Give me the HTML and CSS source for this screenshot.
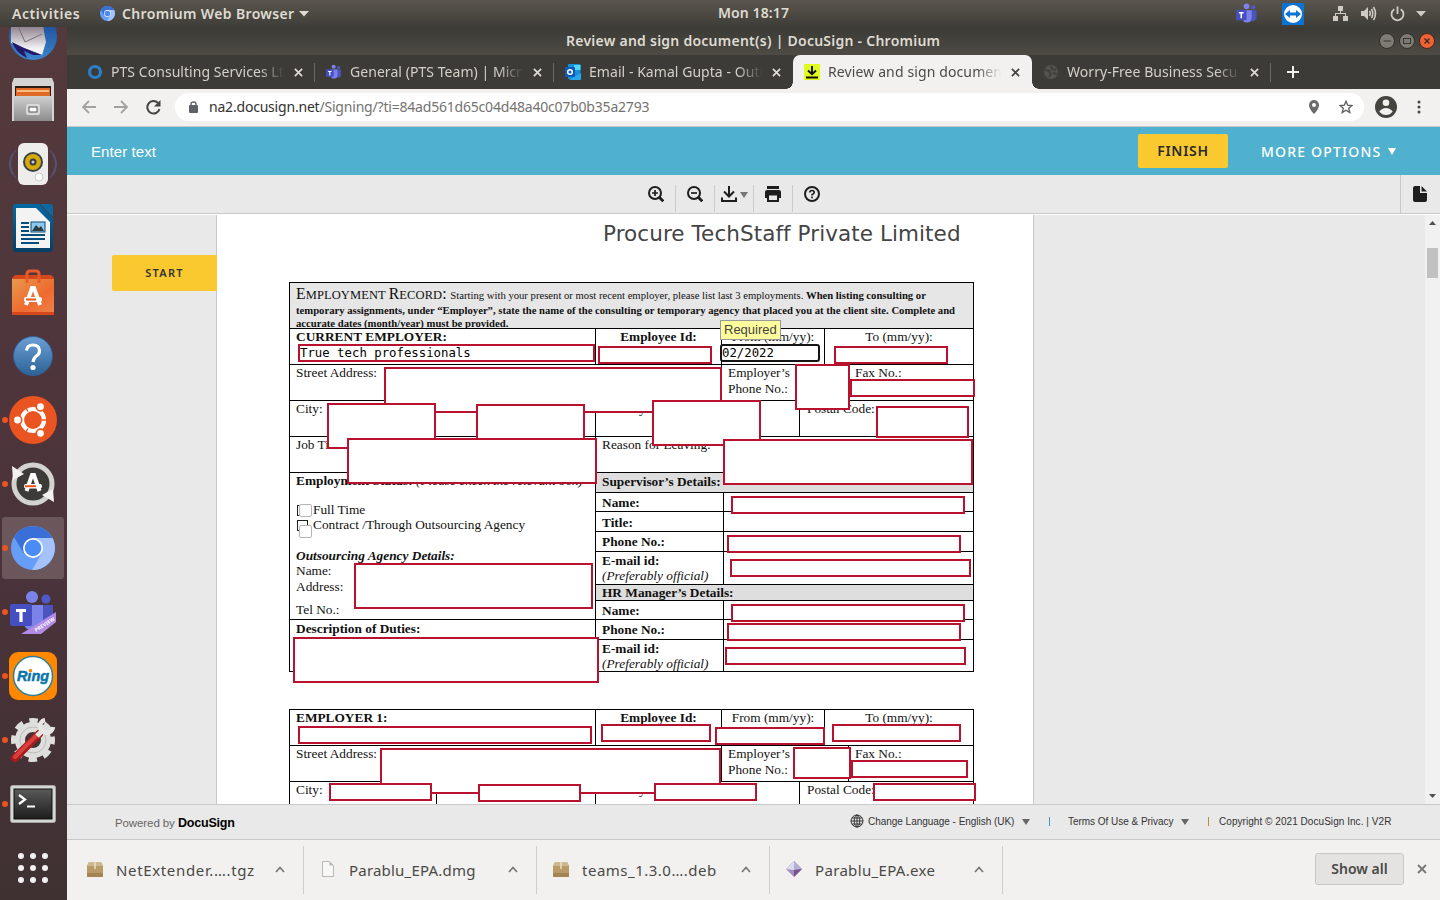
FILE: index.html
```html
<!DOCTYPE html>
<html lang="en">
<head>
<meta charset="utf-8">
<title>Review and sign document(s) | DocuSign - Chromium</title>
<link rel="stylesheet" href="styles.css">
</head>
<body>
<svg width="0" height="0" class="defs">
  <defs>
    <linearGradient id="gGrey" x1="0" y1="0" x2="0" y2="1"><stop offset="0" stop-color="#d0d0d0"/><stop offset="1" stop-color="#8c8c8c"/></linearGradient>
    <linearGradient id="gBird" x1="0" y1="0" x2="0" y2="1"><stop offset="0" stop-color="#163f8c"/><stop offset="1" stop-color="#3c86cf"/></linearGradient>
    <linearGradient id="gMail" x1="0" y1="0" x2="0" y2="1"><stop offset=".3" stop-color="#8d7f8b"/><stop offset=".85" stop-color="#f4f3f5"/></linearGradient>
    <linearGradient id="gOrange" x1="0" y1="0" x2="1" y2="1"><stop offset="0" stop-color="#e8984f"/><stop offset=".6" stop-color="#ee6a2e"/><stop offset="1" stop-color="#f0814a"/></linearGradient>
    <linearGradient id="gHelp" x1="0" y1="0" x2="0" y2="1"><stop offset="0" stop-color="#6d9fd6"/><stop offset="1" stop-color="#2b6396"/></linearGradient>
    <linearGradient id="gWriter" x1="0" y1="0" x2="0" y2="1"><stop offset="0" stop-color="#0369a3"/><stop offset="1" stop-color="#063f66"/></linearGradient>
    <linearGradient id="gTerm" x1="0" y1="0" x2="0" y2="1"><stop offset="0" stop-color="#5a5a5a"/><stop offset="1" stop-color="#1d1d1d"/></linearGradient>
    <symbol id="chromium" viewBox="0 0 44 44">
      <circle cx="22" cy="22" r="22" fill="#669df6"/>
      <path d="M3 11A22 22 0 0 1 41.5 12H22L12.5 27Z" fill="#3a6fd8"/>
      <path d="M41.5 12A22 22 0 0 1 21 44L31 27 22 12Z" fill="#a3c3fa"/>
      <circle cx="22" cy="22" r="10" fill="#fff"/><circle cx="22" cy="22" r="8.3" fill="#4c8bf5"/>
    </symbol>
    <symbol id="teams" viewBox="0 0 46 44">
      <circle cx="22" cy="7" r="6" fill="#7b83eb"/><circle cx="36" cy="9" r="4.5" fill="#5059c9"/>
      <path d="M27 15H43V29A8 8 0 0 1 27 31Z" fill="#4b53bc"/>
      <path d="M13 15H33V31A10 10 0 0 1 13 31Z" fill="#7b83eb"/>
      <rect x="0" y="14" width="22" height="22" rx="2" fill="#454fc0"/>
      <path d="M6 19H16V22H12.6V32H9.4V22H6Z" fill="#fff"/>
    </symbol>
    <symbol id="close" viewBox="0 0 10 10"><path d="M1 1L9 9M9 1L1 9" stroke="currentColor" stroke-width="1.9" fill="none"/></symbol>
    <symbol id="box" viewBox="0 0 16 15"><path d="M2 0H14L16 4V14a1 1 0 0 1-1 1H1a1 1 0 0 1-1-1V4Z" fill="#b89a66"/><path d="M2 0H14L16 4H0Z" fill="#cdb88f"/><path d="M8 0V7" stroke="#e9dcc0" stroke-width="1.6"/><path d="M0 11H16V14a1 1 0 0 1-1 1H1a1 1 0 0 1-1-1Z" fill="#a38552"/></symbol>
    <symbol id="chev" viewBox="0 0 10 7"><path d="M1 6L5 1.5 9 6" fill="none" stroke="#777" stroke-width="1.7"/></symbol>
  </defs>
</svg>

<header class="panel">
  <span class="activities">Activities</span>
  <svg class="panel-app" width="15" height="15"><use href="#chromium"/></svg>
  <span class="app-name">Chromium Web Browser</span>
  <svg class="panel-caret" width="10" height="6"><path d="M0 0H10L5 5.5Z" fill="#dfdbd2"/></svg>
  <span class="clock">Mon 18:17</span>
  <div class="tray">
    <svg class="tr-teams" width="22" height="21"><use href="#teams"/></svg>
    <svg class="tr-view" width="22" height="22"><rect width="22" height="22" fill="#0b72d6"/><circle cx="11" cy="11" r="9" fill="#fff"/><path d="M3 11L8 7V9.5H14V7L19 11 14 15V12.5H8V15Z" fill="#0b72d6"/></svg>
    <svg class="tr-net" width="15" height="15" fill="#cfcbc3"><path d="M5 0h5v5H5zM0 10h5v5H0zM10 10h5v5h-5zM7 5h1v3H7zM2 7h11v1H2zM2 8h1v2H2zM12 8h1v2h-1z"/></svg>
    <svg class="tr-vol" width="16" height="15" fill="none" stroke="#cfcbc3" stroke-width="1.6"><path d="M0 5H3L7 1V14L3 10H0Z" fill="#cfcbc3" stroke="none"/><path d="M8.5 5Q10 7.5 8.5 10M10.5 3Q13 7.5 10.5 12M12.5 1Q16.5 7.5 12.5 14"/></svg>
    <svg class="tr-pow" width="15" height="16" fill="none" stroke="#cfcbc3" stroke-width="1.8"><path d="M4.3 3.2A6 6 0 1 0 10.7 3.2M7.5 .5V8"/></svg>
    <svg width="10" height="6"><path d="M0 0H10L5 5.5Z" fill="#cfcbc3"/></svg>
  </div>
</header>

<div class="desktop">
<nav class="dock">
  <div class="app"><svg width="48" height="48"><circle cx="24" cy="24" r="24" fill="url(#gBird)"/><path d="M2 10L33 2 35 20 37 30 33 43 2 31Z" fill="url(#gMail)"/><path d="M9 14L16 30 33 22" fill="none" stroke="#77707a" stroke-width="1"/><path d="M3 30L15 36 33 43 24 43 15 39 18 46Q7 41 3 30Z" fill="#231a6b"/></svg></div>
  <div class="app"><svg width="42" height="44"><path d="M2 0H40L42 5V43H0V5Z" fill="#d4d4d2"/><rect x="3" y="8" width="36" height="10" fill="#2b1d14"/><rect x="4" y="10" width="34" height="9" fill="#e06a25"/><path d="M5 13H37" stroke="#ffd9a0" stroke-width="1.5"/><rect x="2" y="18" width="38" height="25" fill="url(#gGrey)"/><rect x="14" y="26" width="14" height="11" rx="2" fill="#d9d9d9"/><rect x="17" y="29" width="8" height="5" fill="#fff" stroke="#555"/></svg></div>
  <div class="app"><svg width="48" height="44"><path d="M7 8Q-4 22 7 36M41 8Q52 22 41 36M4 11Q-3 22 4 33M44 11Q51 22 44 33" fill="none" stroke="#565170" stroke-width="1.2"/><rect x="9" y="1" width="30" height="42" rx="6" fill="#ededeb"/><circle cx="24" cy="20" r="10" fill="#3d4147"/><circle cx="24" cy="20" r="8" fill="#d6a90c"/><circle cx="24" cy="20" r="3.5" fill="#3a3d45"/><circle cx="24" cy="20" r="1.5" fill="#ccc"/><circle cx="30" cy="35" r="4" fill="#fff" stroke="#ccc"/></svg></div>
  <div class="app"><svg width="40" height="48"><path d="M3 0H26L40 14V45a3 3 0 0 1-3 3H3a3 3 0 0 1-3-3V3a3 3 0 0 1 3-3Z" fill="url(#gWriter)"/><path d="M27 0H37a3 3 0 0 1 3 3V13Z" fill="#0c68a0"/><path d="M3 4H23L37 18V44H3Z" fill="#f3f3f3"/><path d="M8 19H16M8 23H16M8 27H16M8 31H32M8 35H32M8 39H26" stroke="#064d7b" stroke-width="2"/><rect x="18" y="18" width="14" height="10" fill="#8ec9f0" stroke="#064d7b"/><path d="M19 27L23 21 26 24 28 22 31 27Z" fill="#2d3c3c"/></svg></div>
  <div class="app"><svg width="42" height="46"><path d="M0 9L3 6H39L42 9V46H0Z" fill="#d6481b"/><path d="M15 14V5Q15 2 18 2H24Q27 2 27 5V14" fill="none" stroke="#e95a2b" stroke-width="3"/><path d="M0 10H42V43H0Z" fill="url(#gOrange)"/><path d="M15 14V9M27 14V9" stroke="#e95a2b" stroke-width="3"/><path d="M14 36L20 19H22L28 36" fill="none" stroke="#fff" stroke-width="4"/><rect x="12" y="28" width="18" height="5" rx="2" fill="#fff"/><path d="M14 30.500H24" stroke="#e95420" stroke-width="2"/></svg></div>
  <div class="app"><svg width="42" height="42"><circle cx="21" cy="21" r="19.5" fill="url(#gHelp)" stroke="#2f5f97"/><path d="M14.500 15.500Q15 10 21 10T27.500 15.500Q27.500 19 24.500 21T21 27" fill="none" stroke="#fff" stroke-width="3.200"/><circle cx="21" cy="32.500" r="2.600" fill="#fff"/></svg></div>
  <div class="app run"><svg width="48" height="48"><circle cx="24" cy="24" r="24" fill="#e95420"/><circle cx="24" cy="24" r="11" fill="none" stroke="#fff" stroke-width="4.200"/><g stroke="#e95420" stroke-width="1.600"><circle cx="8.500" cy="24" r="4.200" fill="#fff"/><circle cx="31.500" cy="10.700" r="4.200" fill="#fff"/><circle cx="31.500" cy="37.300" r="4.200" fill="#fff"/></g><path d="M19 15.500L17 12M19 32.500L17 36M33 24H39" stroke="#e95420" stroke-width="1.500"/></svg></div>
  <div class="app run"><svg width="44" height="44"><circle cx="22" cy="22" r="19" fill="#3c3b38" stroke="#d3d3d0" stroke-width="5"/><path d="M1 4L2 18 13 12ZM43 40L42 27 31 33Z" fill="#f2f2f0"/><path d="M15.500 29L21 13H23L28.500 29" fill="none" stroke="#fff" stroke-width="4"/><rect x="13" y="22" width="18" height="4.500" rx="2" fill="#fff"/><path d="M14 24.200H25" stroke="#e95420" stroke-width="2"/></svg></div>
  <div class="app run active"><svg width="44" height="44"><use href="#chromium"/></svg></div>
  <div class="app run"><svg width="46" height="44"><use href="#teams"/><path d="M11 44L46 22V32L31 44Z" fill="#b18be4"/><text x="0" y="0" transform="translate(26 42) rotate(-32)" class="preview">PREVIEW</text></svg></div>
  <div class="app run"><svg width="48" height="48"><rect width="48" height="48" rx="9" fill="#ff8800"/><circle cx="24" cy="24" r="19.500" fill="#fff" stroke="#2d7f9d" stroke-width="1.500"/><text x="24" y="29" text-anchor="middle" class="ring">Ring</text><circle cx="21.500" cy="18.500" r="1.700" fill="#ff8800"/></svg></div>
  <div class="app run"><svg width="46" height="46"><circle cx="23" cy="23" r="13" fill="none" stroke="#dededc" stroke-width="10"/><circle cx="23" cy="23" r="19.500" fill="none" stroke="#dededc" stroke-width="5" stroke-dasharray="8.500 6.815" stroke-dashoffset="4.250"/><circle cx="23" cy="23" r="13" fill="none" stroke="#bdbdbb"/><path d="M5 41L29 17" stroke="#a81c1c" stroke-width="8" stroke-linecap="round"/><path d="M5 40L28 17" stroke="#d84040" stroke-width="4" stroke-linecap="round"/><path d="M27 19L34 12" stroke="#e6e6e4" stroke-width="5"/><path d="M35 3A6.500 6.500 0 1 0 43 10" fill="none" stroke="#e6e6e4" stroke-width="4.500"/></svg></div>
  <div class="app run"><svg width="46" height="38"><rect x=".5" y=".5" width="45" height="37" rx="2" fill="#d6d6d4" stroke="#a5a5a5"/><rect x="4" y="4" width="38" height="30" fill="url(#gTerm)" stroke="#111"/><path d="M9 10L15 14.500 9 19" fill="none" stroke="#fff" stroke-width="2.200"/><path d="M17 21.500H25" stroke="#fff" stroke-width="2"/></svg></div>
  <div class="app grid"><i></i><i></i><i></i><i></i><i></i><i></i><i></i><i></i><i></i></div>
</nav>

<main class="window">
  <div class="titlebar"><span>Review and sign document(s) | DocuSign - Chromium</span>
    <div class="wm">
      <svg width="16" height="16"><circle cx="8" cy="8" r="7.500" fill="#7d7b74" stroke="#302f2c"/><path d="M4.500 8H12" stroke="#35342f"/></svg>
      <svg width="16" height="16"><circle cx="8" cy="8" r="7.500" fill="#7d7b74" stroke="#302f2c"/><rect x="4.500" y="5.500" width="7" height="5" fill="none" stroke="#35342f"/></svg>
      <svg width="16" height="16"><circle cx="8" cy="8" r="7.500" fill="#ee6336" stroke="#46281c"/><path d="M5.500 5.500L10.500 10.500M10.500 5.500L5.500 10.500" stroke="#3c2a20" stroke-width="1.400"/></svg>
    </div>
  </div>

  <div class="tabs">
    <div class="tab"><svg class="fav" width="16" height="16"><circle cx="8" cy="8" r="5.500" fill="none" stroke="#2a7fc9" stroke-width="3.200"/></svg><span class="tt t1">PTS Consulting Services Lt</span><svg class="x" width="9" height="9"><use href="#close"/></svg></div>
    <div class="tab"><svg class="fav" width="16" height="16"><use href="#teams"/></svg><span class="tt t2">General (PTS Team) | Micro</span><svg class="x" width="9" height="9"><use href="#close"/></svg></div>
    <div class="tab nosep"><svg class="fav" width="16" height="16"><rect x="3" width="12.500" height="15" rx="1" fill="#1490df"/><rect x="9" y="1" width="6.500" height="5" fill="#50d9ff"/><path d="M4 16L16 9V15a1 1 0 0 1-1 1Z" fill="#28a8ea"/><rect y="3" width="10" height="10" rx="1" fill="#0f5ab5"/><circle cx="5" cy="8" r="2.300" fill="none" stroke="#fff" stroke-width="1.500"/></svg><span class="tt t3">Email - Kamal Gupta - Outl</span><svg class="x" width="9" height="9"><use href="#close"/></svg></div>
    <div class="tab on"><svg class="fav" width="16" height="16"><rect width="16" height="16" fill="#e1fb1d"/><path d="M8 2V9.500M4 6.500L8 10.300 12 6.500M2 13.500H14" fill="none" stroke="#111" stroke-width="1.900"/></svg><span class="tt t4">Review and sign documen</span><svg class="x" width="9" height="9"><use href="#close"/></svg></div>
    <div class="tab"><svg class="fav" width="16" height="16"><circle cx="8" cy="8" r="7" fill="#55534f"/><path d="M2 6L6 7 8 10 6 13M8 2L9 5 13 6M10 9L14 10" stroke="#403f3b" stroke-width="2" fill="none"/></svg><span class="tt t5">Worry-Free Business Secu</span><svg class="x" width="9" height="9"><use href="#close"/></svg></div>
    <svg class="plus" width="12" height="12"><path d="M6 0V12M0 6H12" stroke="#f0efec" stroke-width="2"/></svg>
  </div>

  <div class="navbar">
    <svg width="14" height="14" class="b1"><path d="M14 7H1.500M7 1L1 7 7 13" fill="none" stroke="#a3a29f" stroke-width="1.800"/></svg>
    <svg width="14" height="14" class="b2"><path d="M0 7H12.500M7 1L13 7 7 13" fill="none" stroke="#a3a29f" stroke-width="1.800"/></svg>
    <svg width="15" height="15" class="b3"><path d="M12 3A6.200 6.200 0 1 0 13.500 9" fill="none" stroke="#45443f" stroke-width="2"/><path d="M14.500 0V6.500H8Z" fill="#45443f"/></svg>
    <div class="url">
      <svg width="9" height="12"><rect y="4" width="9" height="8" rx="1" fill="#5f6368"/><path d="M2 5V3Q2 1 4.500 1T7 3V5" fill="none" stroke="#5f6368" stroke-width="1.400"/></svg>
      <span class="addr"><b>na2.docusign.net</b>/Signing/?ti=84ad561d65c04d48a40c07b0b35a2793</span>
      <svg class="pin" width="10" height="14"><path d="M5 0A5 5 0 0 1 10 5Q10 9 5 14 0 9 0 5A5 5 0 0 1 5 0Z" fill="#6b6b6b"/><circle cx="5" cy="5" r="2" fill="#fff"/></svg>
      <svg class="star" width="14" height="14"><path d="M7 1.200L8.700 5.200 13 5.500 9.700 8.300 10.800 12.600 7 10.300 3.200 12.600 4.300 8.300 1 5.500 5.300 5.200Z" fill="none" stroke="#5c5b59" stroke-width="1.300"/></svg>
    </div>
    <svg class="user" width="22" height="22"><circle cx="11" cy="11" r="11" fill="#45443f"/><circle cx="11" cy="6.700" r="3.300" fill="#f2f1f0"/><path d="M4.300 15.500Q7 12 11 12T17.700 15.500Q15 19 11 19T4.300 15.500Z" fill="#f2f1f0"/></svg>
    <svg width="4" height="14" fill="#45443f"><circle cx="2" cy="2" r="1.500"/><circle cx="2" cy="7" r="1.500"/><circle cx="2" cy="12" r="1.500"/></svg>
  </div>

  <div class="bluebar"><span class="enter">Enter text</span><span class="finish">FINISH</span><span class="more">MORE OPTIONS</span><svg width="8" height="7"><path d="M0 0H8L4 7Z" fill="#fff"/></svg></div>

  <div class="tools">
    <div class="tool"><svg width="16" height="16" fill="none" stroke="#1e1e1e" stroke-width="2"><circle cx="7" cy="7" r="6"/><path d="M11 11L15.300 15.300" stroke-width="2.800"/><path d="M4 7H10M7 4V10" stroke-width="1.700"/></svg></div>
    <div class="tool"><svg width="16" height="16" fill="none" stroke="#1e1e1e" stroke-width="2"><circle cx="7" cy="7" r="6"/><path d="M11 11L15.300 15.300" stroke-width="2.800"/><path d="M4 7H10" stroke-width="1.700"/></svg></div>
    <div class="tool dl"><svg width="16" height="16" fill="none" stroke="#1e1e1e" stroke-width="2"><path d="M8 0V10M3 5.500L8 10.500 13 5.500M1 11.500V15H15V11.500"/></svg><svg width="8" height="6"><path d="M0 0H8L4 6Z" fill="#777"/></svg></div>
    <div class="tool"><svg width="16" height="16"><path d="M2 0H14V3H2ZM2 4H14a2 2 0 0 1 2 2V12H13V8H3V12H0V6a2 2 0 0 1 2-2Z" fill="#1e1e1e"/><path d="M3 8.500H13V15H3Z" fill="#e9e9e9" stroke="#1e1e1e" stroke-width="2"/></svg></div>
    <div class="tool last"><svg width="16" height="16" fill="none" stroke="#1e1e1e" stroke-width="2"><circle cx="8" cy="8" r="7"/><path d="M5.800 6.600Q5.800 4.500 8 4.500T10.200 6.500Q10.200 7.600 8 8.700V9.600M8 10.600V12.200" stroke-width="1.700"/></svg></div>
    <div class="side"><svg width="14" height="16"><path d="M2 0H7V7H14V14a2 2 0 0 1-2 2H2a2 2 0 0 1-2-2V2a2 2 0 0 1 2-2ZM8.500 0L14 5.500H8.500Z" fill="#1e1e1e"/></svg></div>
  </div>

  <div class="viewer">
    <div class="gutter"><span class="start">START</span></div>
    <div class="page">
      <h1>Procure TechStaff Private Limited</h1>

      <div class="form first-form">
        <div class="row intro"><p><span class="rec"><big>E</big>MPLOYMENT <big>R</big>ECORD<big>:</big></span> <span class="s1">Starting with your present or most recent employer, please list last 3 employments.</span> <b class="s2">When listing consulting or</b><br><b class="s3">temporary assignments, under “Employer”, state the name of the consulting or temporary agency that placed you at the client site. Complete and</b><br><b class="s4">accurate dates (month/year) must be provided.</b></p></div>
        <div class="row"><div class="c c306"><b class="ce">CURRENT EMPLOYER:</b></div><div class="c c126 mid"><b>Employee Id:</b></div><div class="c c103 mid">From (mm/yy):</div><div class="c rest mid">To (mm/yy):</div></div>
        <div class="row"><div class="c c432">Street Address:</div><div class="c c127">Employer’s<br>Phone No.:</div><div class="c rest">Fax No.:</div></div>
        <div class="row"><div class="c c147">City:</div><div class="c c159">State:</div><div class="c c204">Country:</div><div class="c rest pc">Postal Code:</div></div>
        <div class="row"><div class="c c306">Job Title:</div><div class="c rest">Reason for Leaving:</div></div>
        <div class="split">
          <div class="left">
            <div class="status">
              <p><b>Employment Status:</b> <em>(Please check the relevant box)</em></p>
              <p class="opt first"><i class="sq"></i>Full Time</p>
              <p class="opt"><i class="sq two"></i>Contract /Through Outsourcing Agency</p>
              <p class="agency"><b><em>Outsourcing Agency Details:</em></b></p>
              <p>Name:</p><p>Address:</p><p class="tel">Tel No.:</p>
            </div>
            <div class="duties"><b>Description of Duties:</b></div>
          </div>
          <div class="right">
            <div class="r h20 shade sup"><b>Supervisor’s Details:</b></div>
            <div class="r h19"><b>Name:</b></div>
            <div class="r h20 low"><b>Title:</b></div>
            <div class="r h20"><b>Phone No.:</b></div>
            <div class="r h33"><b>E-mail id:<br></b><em>(Preferably official)</em></div>
            <div class="r h16 shade"><b>HR Manager’s Details:</b></div>
            <div class="r h19"><b>Name:</b></div>
            <div class="r h20"><b>Phone No.:</b></div>
            <div class="r h32"><b>E-mail id:<br></b><em>(Preferably official)</em></div>
          </div>
        </div>
      </div>

      <div class="form second">
        <div class="row"><div class="c c306"><b class="e1">EMPLOYER 1:</b></div><div class="c c126 mid"><b>Employee Id:</b></div><div class="c c103 mid">From (mm/yy):</div><div class="c rest mid">To (mm/yy):</div></div>
        <div class="row"><div class="c c432">Street Address:</div><div class="c c127">Employer’s<br>Phone No.:</div><div class="c rest">Fax No.:</div></div>
        <div class="row"><div class="c c147">City:</div><div class="c c159">State:</div><div class="c c204">Country:</div><div class="c rest pc">Postal Code:</div></div>
      </div>

      <div class="f a1">True tech professionals</div><div class="f a2"></div><div class="f a3">02/2022</div><div class="f a4"></div>
      <div class="f a5"></div><div class="f a6"></div><div class="f a7"></div>
      <div class="f a8"></div><div class="f a9"></div><div class="f a10"></div><div class="f a11"></div>
      <div class="f a12"></div><div class="f a13"></div>
      <div class="f a14"></div><div class="f a15"></div><div class="f a16"></div>
      <div class="f a17"></div><div class="f a18"></div><div class="f a19"></div>
      <div class="f a20"></div><div class="f a21"></div>
      <div class="f d1"></div><div class="f d2"></div><div class="f d3"></div><div class="f d4"></div>
      <div class="f d5"></div><div class="f d6"></div><div class="f d7"></div>
      <div class="f d8"></div><div class="f d9"></div><div class="f d10"></div><div class="f d11"></div>
      <i class="chk k1"></i><i class="chk k2"></i>
      <div class="tip">Required</div>
    </div>
    <div class="scroll"><svg width="7" height="4"><path d="M3.500 0L7 4H0Z" fill="#505050"/></svg><div class="thumb"></div><svg width="7" height="4"><path d="M0 0H7L3.500 4Z" fill="#505050"/></svg></div>
  </div>

  <div class="foot">
    <span class="pow">Powered by</span><b class="ds">DocuSign</b>
    <svg class="globe" width="14" height="14" fill="none" stroke="#333"><circle cx="7" cy="7" r="6"/><ellipse cx="7" cy="7" rx="2.800" ry="6"/><path d="M1 7H13M7 1V13M2 4H12M2 10H12"/></svg>
    <span class="lang">Change Language - English (UK)</span><svg class="ar" width="8" height="6"><path d="M0 0H8L4 6Z" fill="#666"/></svg>
    <i class="bar blue"></i><span class="terms">Terms Of Use &amp; Privacy</span><svg class="ar" width="8" height="6"><path d="M0 0H8L4 6Z" fill="#666"/></svg>
    <i class="bar gold"></i><span class="copy">Copyright © 2021 DocuSign Inc. | V2R</span>
  </div>

  <div class="downloads">
    <div class="dlitem"><svg width="16" height="15"><use href="#box"/></svg><span class="n1">NetExtender.….tgz</span><svg class="cv" width="10" height="7"><use href="#chev"/></svg></div>
    <div class="dlitem"><svg width="16" height="16"><path d="M2.500 .5H9.500L13.500 4.500V15.500H2.500Z" fill="#f8f8f8" stroke="#b9b9b7"/><path d="M9.500 .5V4.500H13.500Z" fill="#b9b9b7"/></svg><span class="n2">Parablu_EPA.dmg</span><svg class="cv" width="10" height="7"><use href="#chev"/></svg></div>
    <div class="dlitem"><svg width="16" height="15"><use href="#box"/></svg><span class="n3">teams_1.3.0….deb</span><svg class="cv" width="10" height="7"><use href="#chev"/></svg></div>
    <div class="dlitem"><svg width="16" height="16"><path d="M8 0L16 8 8 16 0 8Z" fill="#a08fbd"/><path d="M8 0V9L0 8Z" fill="#dcdcf0"/><path d="M8 0L16 8 8 9Z" fill="#b3b0d4"/><path d="M8 9L16 8 8 16Z" fill="#79528c"/></svg><span class="n4">Parablu_EPA.exe</span><svg class="cv" width="10" height="7"><use href="#chev"/></svg></div>
    <span class="showall">Show all</span><svg class="dx" width="10" height="10"><use href="#close"/></svg>
  </div>
</main>
</div>
</body>
</html>
```
FILE: styles.css
```css
* { box-sizing: border-box; }
body { margin: 0; width: 1440px; height: 900px; overflow: hidden; font-family: "Noto Sans", "Open Sans", sans-serif; }
svg { display: block; flex: none; }
p { margin: 0; }
span, b { white-space: nowrap; }
.defs { position: absolute; }

.panel { position: relative; height: 27px; background: linear-gradient(#5a564d, #3f3d38); display: flex; align-items: center; color: #dfdbd2; font-size: 14px; font-weight: 600; }
.activities { margin-left: 12px; width: 88px; letter-spacing: .58px; }
.app-name { margin-left: 7px; width: 172px; letter-spacing: .35px; }
.panel-caret { margin-left: 5px; }
.clock { position: absolute; left: 718px; top: 3px; letter-spacing: .1px; }
.tray { margin-left: auto; margin-right: 15px; display: flex; align-items: center; }
.tr-teams { margin-right: 24px; }
.tr-view { margin-right: 29px; }
.tr-net { margin-right: 13px; }
.tr-vol { margin-right: 13px; }
.tr-pow { margin-right: 11px; }
.tray > svg { position: relative; left: 1px; }

.desktop { display: flex; height: 873px; }
.dock { width: 67px; overflow: hidden; background: linear-gradient(#543a3c, #4b333b 60%, #3f3132); }
.app { height: 64px; width: 67px; padding-right: 1px; display: flex; align-items: center; justify-content: center; position: relative; }
.app:first-child { margin-top: -23px; }
.app.active::after { content: ""; position: absolute; z-index: -1; left: 2px; top: 1px; width: 62px; height: 62px; border-radius: 3px; background: #6b565b; }
.app.active { z-index: 0; }
.app.run::before { content: ""; position: absolute; left: 2px; top: 29px; width: 6px; height: 6px; border-radius: 3px; background: #e95420; }
.app.grid { display: grid; grid-template-columns: repeat(3, 6px); grid-template-rows: repeat(3, 6px); gap: 6px; align-content: center; align-items: stretch; }
.grid i { background: #f2f0f0; border-radius: 50%; }
.preview { font: bold 5px "Noto Sans", sans-serif; fill: #fff; letter-spacing: .1px; }
.ring { font: italic bold 14.500px "Liberation Sans", sans-serif; fill: #0b76a9; stroke: #0b76a9; stroke-width: .5px; }

.window { width: 1373px; display: flex; flex-direction: column; }
.titlebar { height: 28px; background: linear-gradient(#3b3a36, #4d4b44); position: relative; display: flex; align-items: center; padding-left: 499px; color: #dfdbd2; font-size: 14px; font-weight: 600; letter-spacing: .25px; }
.titlebar span { margin-bottom: 1px; }
.wm { margin-left: auto; display: flex; gap: 4px; margin-right: 5px; }
.tabs { height: 34px; background: #3c3b37; display: flex; padding-left: 9px; align-items: center; }
.tab { width: 239px; height: 34px; padding-left: 11px; display: flex; align-items: center; position: relative; color: #d3d0c9; font-size: 14px; }
.tab::after { content: ""; position: absolute; right: 0; top: 8px; width: 1px; height: 19px; background: #6b6964; }
.tab.nosep::after { display: none; }
.tab.on::before, .tab.on::after { content: ""; position: absolute; top: auto; bottom: 0; width: 7px; height: 7px; }
.tab.on::before { left: -7px; background: radial-gradient(circle at 0 0, transparent 6.500px, #f2f1f0 7px); }
.tab.on::after { right: -7px; background: radial-gradient(circle at 100% 0, transparent 6.500px, #f2f1f0 7px); }
.tt { margin: 0 0 2px 8px; width: 175px; -webkit-mask-image: linear-gradient(90deg, #000 85%, transparent 99%); }
.t1 { letter-spacing: .05px; }
.t2 { letter-spacing: .05px; }
.t3 { letter-spacing: .05px; }
.t4 { letter-spacing: .12px; }
.t5 { letter-spacing: .05px; }
.x { margin-left: 8px; color: #e0ddd6; }
.tab.on { background: #f2f1f0; color: #4b4a47; border-radius: 7px 7px 0 0; }
.on .x { color: #45443f; }
.plus { margin-left: 16px; }
.navbar { height: 38px; background: #f2f1f0; border-bottom: 1px solid #c9c8c6; display: flex; align-items: center; padding-left: 15px; }
.b2 { margin-left: 18px; }
.b3 { margin-left: 18px; }
.url { margin-left: 14px; width: 1189px; height: 28px; margin-bottom: 2px; border-radius: 14px; background: #fff; display: flex; align-items: center; padding: 0 11px 0 14px; color: #74736f; font-size: 14px; }
.navbar > svg { margin-bottom: 1px; }
.addr { margin-left: 11px; letter-spacing: -.2px; }
.addr b { font-weight: 400; color: #33322f; }
.pin { margin-left: auto; margin-right: 20px; }
.user { margin: 0 20px 0 11px; }

.bluebar { height: 48px; background: #4fb1ce; display: flex; align-items: center; padding-left: 24px; color: #fff; }
.enter { font: 15px "Liberation Sans", sans-serif; letter-spacing: .08px; }
.finish { margin-left: auto; width: 90px; height: 34px; line-height: 34px; text-align: center; background: #f9c92f; border-radius: 2px; color: #2b2b2b; font-size: 14px; font-weight: 600; letter-spacing: .7px; }
.more { margin-left: 33px; width: 127px; font-size: 14px; font-weight: 500; letter-spacing: 1.2px; }
.bluebar svg { margin-right: 44px; }

.tools { height: 40px; background: #e9e9e9; border-bottom: 1px solid #fff; box-shadow: inset 0 -1px #c9c9c9; display: flex; padding-left: 570px; }
.tool { width: 39px; height: 27px; margin-top: 10px; border-right: 1px solid #cbcbcb; display: flex; justify-content: center; padding-top: 1px; }
.tool.last { border: 0; padding-right: 1px; }
.tool.dl { gap: 3px; align-items: flex-start; padding-left: 1px; }
.dl svg + svg { margin-top: 6px; }
.side { margin-left: auto; width: 40px; border-left: 1px solid #c9c9c9; padding: 11px 0 0 12px; }

.viewer { height: 589px; background: #e9e9e9; display: flex; overflow: hidden; }
.gutter { width: 150px; padding: 40px 0 0 45px; position: relative; z-index: 1; }
.start { display: block; width: 105px; height: 36px; line-height: 36px; background: #f9c92f; text-align: center; font-size: 11px; font-weight: 600; letter-spacing: 1.2px; color: #333; border-radius: 2px 0 0 2px; }
.page { position: relative; width: 817px; height: 589px; background: #fff; box-shadow: -1px 0 #c9c9c9; border-right: 1px solid #c9c9c9; font: 13.330px/15.500px "Liberation Serif", serif; color: #111; padding-left: 72px; }
h1 { margin: 0; padding: 5px 0 0 314px; height: 67px; font: 21.500px/27px "DejaVu Sans", sans-serif; letter-spacing: .07px; color: #444; white-space: nowrap; }
.form { width: 685px; border: 1px solid #000; border-bottom: 0; }
.form.second { margin-top: 37px; }
.row { display: flex; height: 36px; border-bottom: 1px solid #000; }
.row.intro { height: 46px; background: #e6e6e6; padding: 3px 0 0 6px; font-size: 10.670px; line-height: 12.500px; }
.intro .rec { font-size: 12.500px; line-height: 18px; letter-spacing: .1px; margin-right: 1px; }
.rec big { font-size: 15.700px; line-height: 16px; }
.c { padding: 0 0 0 6px; border-right: 1px solid #000; white-space: nowrap; overflow: hidden; }
.c.rest { flex: 1; border-right: 0; }
.c.mid { text-align: center; padding-left: 0; }
.c.pc { padding-left: 7px; }
.ce { letter-spacing: .03px; }
.c306 { width: 306px; } .c126 { width: 126px; } .c103 { width: 103px; } .c432 { width: 432px; }
.c127 { width: 127px; } .c147 { width: 147px; } .c159 { width: 159px; } .c204 { width: 204px; }
.first-form .c147 { width: 146px; }
.first-form .c159 { width: 160px; }
.split { display: flex; }
.left { width: 306px; border-right: 1px solid #000; }
.status { height: 147px; border-bottom: 1px solid #000; padding: 0 0 0 6px; white-space: nowrap; }
.opt { position: relative; padding-left: 17px; }
.opt.first { margin-top: 13px; }
.sq { position: absolute; left: 1px; top: 3px; width: 11px; height: 11px; border: 1px solid #222; border-width: 1px 0 1px 1px; }
.sq.two { border-right-width: 1px; }
.agency { margin-top: 15px; }
.tel { margin-top: 8px; }
.duties { height: 52px; border-bottom: 1px solid #000; padding: 1px 0 0 6px; }
.right { flex: 1; }
.r { border-bottom: 1px solid #000; padding-left: 6px; padding-top: 2px; background: linear-gradient(#000, #000) 127px 0/1px 100% no-repeat; overflow: hidden; }
.r.shade { background: #dedede; }
.h20 { height: 20px; } .h19 { height: 19px; }
.h33 { height: 33px; padding-top: 1px; line-height: 15.200px; }
.h16 { height: 16px; padding-top: 0; }
.h32 { height: 32px; padding-top: 1px; line-height: 15px; }
.r.sup { padding-top: 1px; }
.r.low { padding-top: 3px; }

.f { position: absolute; border: 2px solid #b8122f; background: #fff; height: 18px; font: 12.330px/14px "DejaVu Sans Mono", monospace; color: #000; white-space: nowrap; }
.a1 { left: 81px; top: 129px; width: 297px; }
.a2 { left: 381px; top: 131px; width: 114px; }
.f.a3 { left: 503px; top: 129px; width: 100px; border-color: #151515; border-radius: 3px; }
.a4 { left: 617px; top: 131px; width: 114px; }
.a5 { left: 167px; top: 152px; width: 338px; height: 46px; }
.a6 { left: 578px; top: 149px; width: 55px; height: 46px; }
.a7 { left: 633px; top: 164px; width: 125px; }
.a8 { left: 110px; top: 188px; width: 109px; height: 46px; }
.a9 { left: 259px; top: 189px; width: 109px; height: 46px; }
.a10 { left: 435px; top: 185px; width: 109px; height: 46px; }
.a11 { left: 659px; top: 191px; width: 93px; height: 32px; }
.a12 { left: 130px; top: 223px; width: 250px; height: 46px; }
.a13 { left: 506px; top: 224px; width: 250px; height: 46px; }
.a14 { left: 514px; top: 281px; width: 234px; }
.a15 { left: 510px; top: 320px; width: 234px; }
.a16 { left: 513px; top: 344px; width: 241px; }
.a17 { left: 514px; top: 389px; width: 234px; }
.a18 { left: 510px; top: 408px; width: 234px; }
.a19 { left: 508px; top: 432px; width: 241px; }
.a20 { left: 137px; top: 348px; width: 239px; height: 46px; }
.a21 { left: 76px; top: 422px; width: 306px; height: 46px; }
.d1 { left: 81px; top: 511px; width: 294px; }
.d2 { left: 384px; top: 509px; width: 110px; }
.d3 { left: 498px; top: 512px; width: 110px; }
.d4 { left: 615px; top: 509px; width: 129px; }
.d5 { left: 163px; top: 533px; width: 341px; height: 46px; }
.d6 { left: 576px; top: 532px; width: 58px; height: 32px; }
.d7 { left: 634px; top: 545px; width: 117px; }
.d8 { left: 112px; top: 568px; width: 103px; }
.d9 { left: 261px; top: 569px; width: 103px; }
.d10 { left: 437px; top: 568px; width: 103px; }
.d11 { left: 656px; top: 568px; width: 103px; }
.chk { position: absolute; left: 82px; width: 13px; height: 13px; border: 1px solid #b5b5b5; border-radius: 2px; background: #fff; }
.k1 { top: 289px; } .k2 { top: 310px; }
.tip { position: absolute; left: 503px; top: 105px; width: 61px; height: 20px; border: 1px solid #999; background: #fdfc9d; font: 13px/18px "Liberation Sans", sans-serif; color: #444; padding-left: 3px; }
.scroll { margin-left: auto; width: 15px; background: #f1f1f1; display: flex; flex-direction: column; align-items: center; padding: 6px 0; }
.thumb { width: 11px; height: 30px; background: #c1c1c1; margin: 23px 0 auto; }

.foot { height: 36px; background: #e9e9e9; border: 1px solid #c9c9c9; border-width: 1px 0; display: flex; align-items: center; padding: 0 48px 1px 48px; font: 10px "Liberation Sans", sans-serif; color: #333; }
.pow { font-size: 11.500px; letter-spacing: -.1px; color: #666; width: 63px; margin-top: 3px; }
.ds { font-size: 12.500px; color: #000; margin-top: 2px; letter-spacing: -.2px; }
.globe { margin-left: auto; margin-right: 4px; margin-bottom: 2px; }
.lang { width: 154px; letter-spacing: -.03px; }
.terms { width: 113px; letter-spacing: -.03px; }
.bar { width: 1px; height: 9px; margin-left: 19px; }
.blue { background: #4a8fc4; margin-right: 18px; }
.gold { background: #c08a3a; margin-right: 10px; }
.copy { width: 173px; letter-spacing: .05px; }
.downloads { height: 60px; background: #f2f1f0; display: flex; align-items: center; }
.dlitem { width: 233px; height: 48px; border-right: 1px solid #cfcecb; display: flex; align-items: center; padding-left: 16px; font-size: 15px; color: #4a4945; }
.dlitem:first-child { width: 237px; padding-left: 20px; }
.dlitem > svg { margin-bottom: 2px; }
.dlitem span { margin-left: 13px; }
.n1 { letter-spacing: .65px; }
.n2 { letter-spacing: .2px; }
.n3 { letter-spacing: .5px; }
.n4 { letter-spacing: .33px; }
.dlitem .cv { margin-left: auto; margin-right: 18px; }
.showall { margin-left: auto; width: 89px; height: 32px; margin-bottom: 2px; line-height: 29px; border: 1px solid #c8c7c4; border-radius: 3px; background: #e4e3e1; text-align: center; font-size: 14px; font-weight: 600; color: #4a4945; }
.dx { margin: 0 13px 2px; color: #7a7976; }
```
